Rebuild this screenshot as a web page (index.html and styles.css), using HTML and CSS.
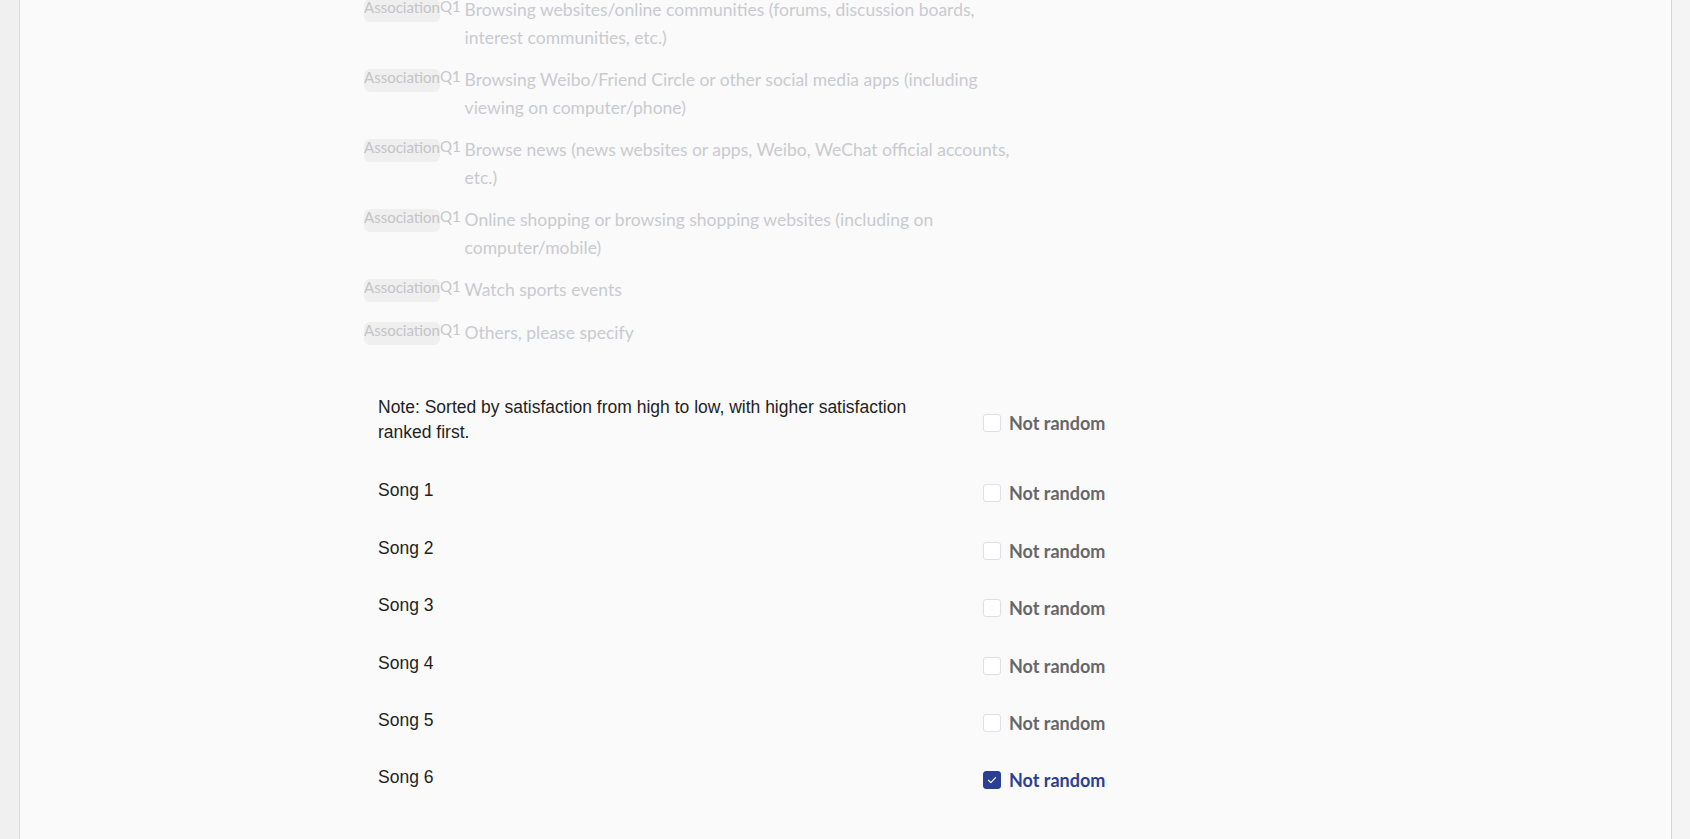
FILE: index.html
```html
<!DOCTYPE html>
<html lang="en">
<head>
<meta charset="utf-8">
<title>Sort question</title>
<link rel="stylesheet" href="styles.css">
</head>
<body>
<div class="page">
  <main class="card">
    <div class="inner">
      <ul class="assoc-list">
        <li class="assoc"><span class="tag"><span class="badge">Association</span>Q1</span><span class="atext">Browsing websites/online communities (forums, discussion boards, interest communities, etc.)</span></li>
        <li class="assoc"><span class="tag"><span class="badge">Association</span>Q1</span><span class="atext">Browsing Weibo/Friend Circle or other social media apps (including viewing on computer/phone)</span></li>
        <li class="assoc"><span class="tag"><span class="badge">Association</span>Q1</span><span class="atext">Browse news (news websites or apps, Weibo, WeChat official accounts, etc.)</span></li>
        <li class="assoc"><span class="tag"><span class="badge">Association</span>Q1</span><span class="atext">Online shopping or browsing shopping websites (including on computer/mobile)</span></li>
        <li class="assoc"><span class="tag"><span class="badge">Association</span>Q1</span><span class="atext">Watch sports events</span></li>
        <li class="assoc"><span class="tag"><span class="badge">Association</span>Q1</span><span class="atext">Others, please specify</span></li>
      </ul>

      <div class="options">
        <div class="opt-row note">
          <div class="opt-label">Note: Sorted by satisfaction from high to low, with higher satisfaction ranked first.</div>
          <label class="chk"><span class="box"></span><span class="chk-text">Not random</span></label>
        </div>
        <div class="opt-row">
          <div class="opt-label">Song 1</div>
          <label class="chk"><span class="box"></span><span class="chk-text">Not random</span></label>
        </div>
        <div class="opt-row">
          <div class="opt-label">Song 2</div>
          <label class="chk"><span class="box"></span><span class="chk-text">Not random</span></label>
        </div>
        <div class="opt-row">
          <div class="opt-label">Song 3</div>
          <label class="chk"><span class="box"></span><span class="chk-text">Not random</span></label>
        </div>
        <div class="opt-row">
          <div class="opt-label">Song 4</div>
          <label class="chk"><span class="box"></span><span class="chk-text">Not random</span></label>
        </div>
        <div class="opt-row">
          <div class="opt-label">Song 5</div>
          <label class="chk"><span class="box"></span><span class="chk-text">Not random</span></label>
        </div>
        <div class="opt-row">
          <div class="opt-label">Song 6</div>
          <label class="chk checked"><span class="box"><svg viewBox="0 0 18 18" width="18" height="18"><path d="M5 9.3l2.7 2.6L13 6.4" fill="none" stroke="#fff" stroke-width="1.3" stroke-linecap="round" stroke-linejoin="round"/></svg></span><span class="chk-text">Not random</span></label>
        </div>
      </div>
    </div>
  </main>
</div>
</body>
</html>
```

FILE: styles.css
```css
html, body {
  margin: 0;
  padding: 0;
  height: 100%;
}
body {
  background: #f0f0f0;
  overflow: hidden;
}
.page {
  display: flex;
  height: 839px;
  background: linear-gradient(to right, #f0f0f0 0, #f0f0f0 50%, #f4f4f4 50%, #f4f4f4 100%);
}
.card {
  flex: 1;
  margin: 0 18px 0 19px;
  background: #fafafa;
  border-left: 1px solid #dcdcdc;
  border-right: 1px solid #d4d4d4;
  overflow: hidden;
}
.inner {
  margin-left: 344px;
  margin-top: -4px;
}
.assoc-list {
  list-style: none;
  margin: 0;
  padding: 0;
  display: flex;
  flex-direction: column;
  gap: 15px;
}
.assoc {
  display: flex;
  align-items: flex-start;
  font-family: Lato, "Open Sans", sans-serif;
  color: #c9cad0;
  font-size: 17.5px;
  line-height: 27.5px;
}
.tag {
  display: flex;
  align-items: flex-start;
  flex: none;
  font-size: 15px;
  line-height: 20px;
  color: #c6c7cc;
  margin-right: 4px;
}
.badge {
  background: #efefef;
  border-radius: 6px;
  height: 23px;
  margin-top: 3px;
  line-height: 17px;
  color: #c4c4c6;
}
.atext {
  width: 570px;
}
.options {
  margin-top: 49px;
  padding-left: 14px;
  display: flex;
  flex-direction: column;
  gap: 32.4px;
  font-family: "Liberation Sans", Arial, sans-serif;
}
.opt-row {
  display: grid;
  grid-template-columns: 560px auto;
  column-gap: 45px;
  align-items: center;
}
.opt-row.note {
  margin-bottom: 1px;
}
.opt-label {
  font-size: 17.5px;
  line-height: 25px;
  color: #1f1f1f;
}
.chk {
  display: flex;
  align-items: center;
  gap: 8px;
  margin-top: 5px;
  justify-self: start;
}
.box {
  width: 16px;
  height: 16px;
  border: 1px solid #dcdfe6;
  border-radius: 3px;
  background: #fff;
  display: flex;
  align-items: center;
  justify-content: center;
  flex: none;
}
.box svg {
  display: block;
}
.chk-text {
  font-family: Lato, "Open Sans", sans-serif;
  font-weight: 700;
  font-size: 18px;
  line-height: 20px;
  color: #66676b;
}
.chk.checked .box {
  background: #2b3f94;
  border-color: #2b3f94;
}
.chk.checked .chk-text {
  color: #2b3f94;
}
```
